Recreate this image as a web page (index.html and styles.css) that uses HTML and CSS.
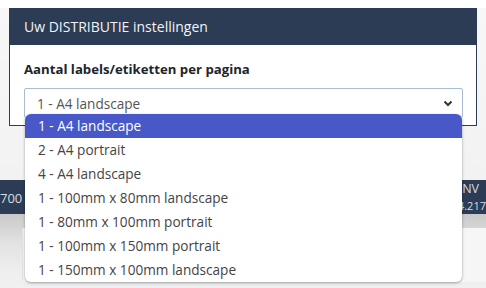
FILE: index.html
```html
<!DOCTYPE html>
<html>
<head>
<meta charset="utf-8">
<link rel="stylesheet" href="styles.css">
</head>
<body>
<div class="page">
  <div class="backdrop-top"></div>
  <div class="strip">
    <span class="strip-left">700</span>
    <span class="strip-right"><span class="nv">NV</span><span class="num">4.217</span></span>
  </div>
  <div class="backdrop-bottom">
    <div class="card"></div>
  </div>
</div>

<div class="modal">
  <div class="modal-header">Uw DISTRIBUTIE instellingen</div>
  <div class="modal-body">
    <label class="field-label">Aantal labels/etiketten per pagina</label>
    <div class="select">
      <span>1 - A4 landscape</span>
      <svg class="chev" width="10" height="7" viewBox="0 0 10 7"><path d="M1.5 1.5 L5 5 L8.5 1.5" fill="none" stroke="#333" stroke-width="2"/></svg>
    </div>
  </div>
</div>

<ul class="dropdown">
  <li class="active">1 - A4 landscape</li>
  <li>2 - A4 portrait</li>
  <li>4 - A4 landscape</li>
  <li>1 - 100mm x 80mm landscape</li>
  <li>1 - 80mm x 100mm portrait</li>
  <li>1 - 100mm x 150mm portrait</li>
  <li>1 - 150mm x 100mm landscape</li>
</ul>
</body>
</html>
```
FILE: styles.css
```css
html, body {
  margin: 0;
  padding: 0;
  width: 486px;
  height: 288px;
  overflow: hidden;
  font-family: "Open Sans", "Liberation Sans", sans-serif;
}
.page {
  display: flex;
  flex-direction: column;
  height: 288px;
  background: #f6f6f6;
}
.backdrop-top {
  height: 180px;
  background: linear-gradient(#ffffff 0, #ffffff 8px, #f7f7f7 8px, #f2f2f2 180px);
}
.strip {
  height: 34px;
  background: #2b3c54;
  color: #d8dde6;
  display: flex;
  justify-content: space-between;
  align-items: center;
  font-size: 13px;
  overflow: hidden;
}
.strip-left {
  margin-top: 2px;
}
.strip-right {
  display: flex;
  flex-direction: column;
  align-items: flex-end;
}
.nv { line-height: 17px; font-size: 12.5px; margin-right: 7px; }
.num { line-height: 17px; font-size: 11px; }
.backdrop-bottom {
  flex: 1;
  background: linear-gradient(#c9c9c9 0, #e3e3e3 30px, #efefef 60px, #f0f0f0 100%);
  position: relative;
}
.card {
  position: absolute;
  left: 22px;
  top: 14px;
  right: 0;
  bottom: 6px;
  background: #f6f6f6;
  border-left: 1px solid #e4e4e4;
}
.modal {
  position: absolute;
  left: 9px;
  top: 8px;
  width: 466px;
  height: 117px;
  border: 1px solid #2b3c54;
  border-top: none;
  background: #fff;
}
.modal-header {
  height: 37px;
  background: #2b3c54;
  color: #f2f4f7;
  font-size: 14px;
  display: flex;
  align-items: center;
  padding-left: 14px;
}
.modal-body {
  padding: 14px 13px 0 14px;
}
.field-label {
  display: block;
  font-size: 13.2px;
  font-weight: 700;
  color: #212529;
  line-height: 20px;
}
.select {
  margin-top: 9px;
  height: 28px;
  border: 1px solid #a9bcd6;
  border-radius: 2px;
  display: flex;
  align-items: center;
  justify-content: space-between;
  padding: 0 9px 0 12px;
  font-size: 13.6px;
  color: #555;
}
.chev { display: block; }
.dropdown {
  position: absolute;
  left: 25px;
  top: 114px;
  width: 437px;
  margin: 0;
  padding: 0;
  list-style: none;
  background: #fff;
  border-radius: 6px;
  box-shadow: 0 1px 3px rgba(0,0,0,0.35);
  overflow: hidden;
}
.dropdown li {
  height: 24px;
  line-height: 24px;
  padding-left: 13px;
  font-size: 13.6px;
  color: #444;
}
.dropdown li.active {
  background: #4858c8;
  color: #fff;
}
```
